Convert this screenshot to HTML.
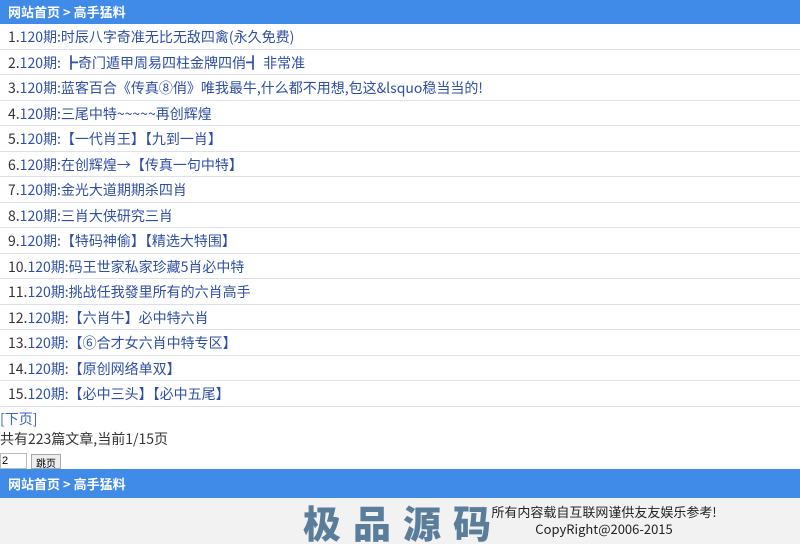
<!DOCTYPE html>
<html><head><meta charset="utf-8"><style>
*{margin:0;padding:0;box-sizing:border-box}
body{width:800px;height:547px;background:#fff;font-family:"Noto Sans CJK SC",sans-serif;font-size:14px;color:#333;overflow:hidden;position:relative}
.bar{background:#408ae8;color:#fff;font-weight:bold;font-size:13px;height:24px;line-height:24px;padding-left:8px}
ul{list-style:none}
li{height:25.5px;line-height:26px;border-bottom:1px solid #dde0ea;padding-left:8px;white-space:nowrap}
li a{color:#2f4fa6;text-decoration:none}
.pg{line-height:20px;margin-top:2px}
.pg a{color:#3b64c0;text-decoration:none}
.jump{height:17px;margin-top:4px;font-size:11px}
.jump input{width:27px;height:16px;border:1px solid #bbb;font-size:11px;vertical-align:top;padding-left:1px}
.jump button{height:15px;font-size:10px;padding:0 4px;border:1px solid #aaa;background:#eee;vertical-align:top;margin-left:4px;margin-top:1px}
.bar2{position:absolute;top:469px;left:0;width:800px;height:29px;line-height:29px}
.foot{position:absolute;top:498px;left:0;width:800px;height:46px;background:#f2f2f2}
.wm{position:absolute;left:303px;top:4px;font-size:38px;color:#5a7d9c;letter-spacing:12px;line-height:40px;font-family:"Noto Sans CJK SC",sans-serif;font-weight:900}
.ft{position:absolute;left:484px;top:5px;width:240px;text-align:center;font-size:13px;color:#222;line-height:17px}
</style></head><body>
<div class="bar">网站首页 &gt; 高手猛料</div>
<ul>
<li>1.<a>120期:时辰八字奇准无比无敌四禽(永久免费)</a></li>
<li>2.<a>120期: ┣奇门遁甲周易四柱金牌四俏┫ 非常准</a></li>
<li>3.<a>120期:蓝客百合《传真⑧俏》唯我最牛,什么都不用想,包这&amp;lsquo稳当当的!</a></li>
<li>4.<a>120期:三尾中特~~~~~再创辉煌</a></li>
<li>5.<a>120期:【一代肖王】【九到一肖】</a></li>
<li>6.<a>120期:在创辉煌→【传真一句中特】</a></li>
<li>7.<a>120期:金光大道期期杀四肖</a></li>
<li>8.<a>120期:三肖大侠研究三肖</a></li>
<li>9.<a>120期:【特码神偷】【精选大特围】</a></li>
<li>10.<a>120期:码王世家私家珍藏5肖必中特</a></li>
<li>11.<a>120期:挑战任我發里所有的六肖高手</a></li>
<li>12.<a>120期:【六肖牛】必中特六肖</a></li>
<li>13.<a>120期:【⑥合才女六肖中特专区】</a></li>
<li>14.<a>120期:【原创网络单双】</a></li>
<li>15.<a>120期:【必中三头】【必中五尾】</a></li>
</ul>
<div class="pg"><a>[下页]</a></div>
<div class="pg" style="margin-top:0">共有223篇文章,当前1/15页</div>
<div class="jump"><input value="2"><button>跳页</button></div>
<div class="bar bar2">网站首页 &gt; 高手猛料</div>
<div class="foot"><div class="wm">极品源码</div><div class="ft">所有内容载自互联网谨供友友娱乐参考!<br>CopyRight@2006-2015</div></div>
</body></html>
